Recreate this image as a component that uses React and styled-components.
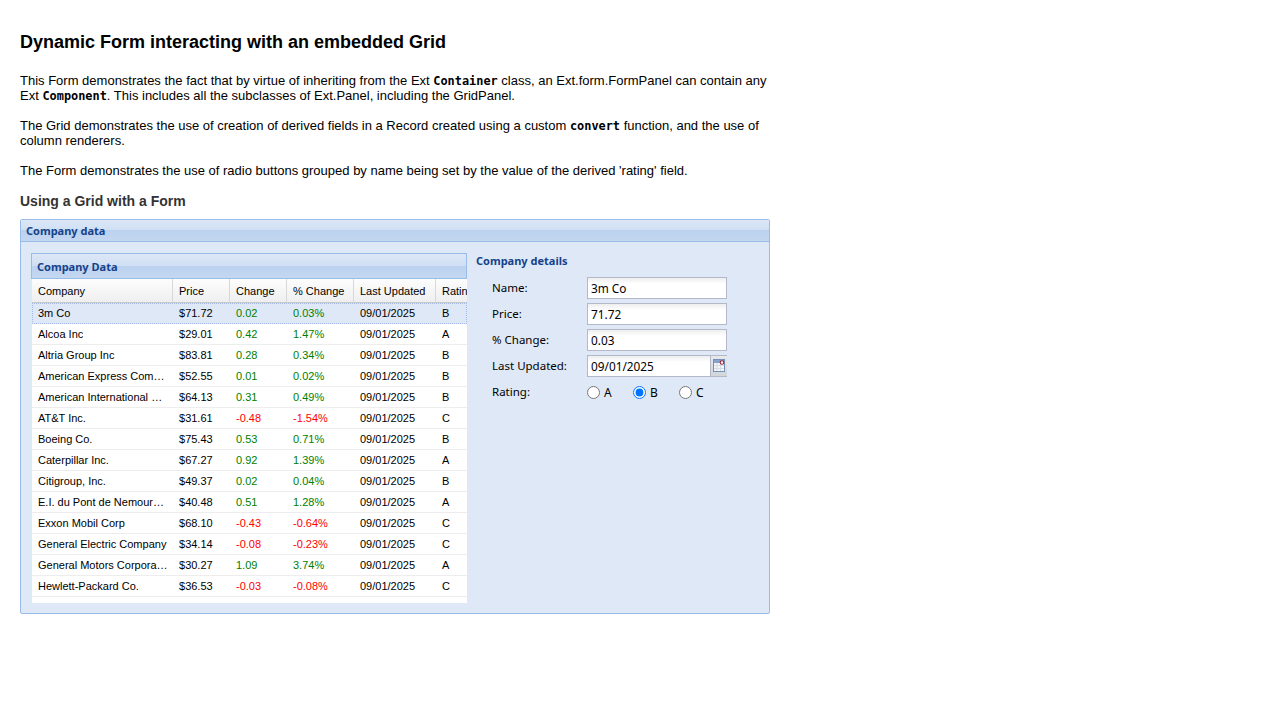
import React from 'react'
import styled, { createGlobalStyle } from 'styled-components'

const GlobalStyle = createGlobalStyle`
    html, body {
        margin: 0;
        padding: 0;
        background: #fff;
    }
    body {
        padding: 20px;
        font-family: "Liberation Sans", Arial, sans-serif;
        font-size: 12px;
        color: #000;
    }
`

const companies = [
    { name: 'American Express Company', price: 52.55, change: 0.01, pct: 0.02, rating: 'B' },
    { name: 'American International Group, Inc.', price: 64.13, change: 0.31, pct: 0.49, rating: 'B' },
    { name: 'AT&T Inc.', price: 31.61, change: -0.48, pct: -1.54, rating: 'C' },
    { name: 'Boeing Co.', price: 75.43, change: 0.53, pct: 0.71, rating: 'B' },
    { name: 'Caterpillar Inc.', price: 67.27, change: 0.92, pct: 1.39, rating: 'A' },
    { name: 'Citigroup, Inc.', price: 49.37, change: 0.02, pct: 0.04, rating: 'B' },
    { name: 'E.I. du Pont de Nemours and Company', price: 40.48, change: 0.51, pct: 1.28, rating: 'A' },
    { name: 'Exxon Mobil Corp', price: 68.1, change: -0.43, pct: -0.64, rating: 'C' },
    { name: 'General Electric Company', price: 34.14, change: -0.08, pct: -0.23, rating: 'C' },
    { name: 'General Motors Corporation', price: 30.27, change: 1.09, pct: 3.74, rating: 'A' },
    { name: 'Hewlett-Packard Co.', price: 36.53, change: -0.03, pct: -0.08, rating: 'C' },
]

const rows = [
    { name: '3m Co', price: 71.72, change: 0.02, pct: 0.03, rating: 'B' },
    { name: 'Alcoa Inc', price: 29.01, change: 0.42, pct: 1.47, rating: 'A' },
    { name: 'Altria Group Inc', price: 83.81, change: 0.28, pct: 0.34, rating: 'B' },
    ...companies,
]

const columns = [
    { title: 'Company', width: 141 },
    { title: 'Price', width: 57 },
    { title: 'Change', width: 57 },
    { title: '% Change', width: 67 },
    { title: 'Last Updated', width: 82 },
    { title: 'Rating', width: 60 },
]

const CalendarIcon = () => (
    <svg width="12" height="13" viewBox="0 0 12 13">
        <rect x="0.5" y="0.5" width="11" height="12" fill="#f2f4f8" stroke="#7391bd" />
        <rect x="1" y="1" width="10" height="3" fill="#86a3cc" />
        <path d="M1 6.5h10M1 9.5h10M4 4v8M7.5 4v8" stroke="#d6dce6" strokeWidth="1" />
        <circle cx="9" cy="3.5" r="1.8" fill="#fff" stroke="#a02030" strokeWidth="1.1" />
    </svg>
)

const App = () => {
    const selected = rows[0]
    return (
        <>
            <GlobalStyle />
            <Title>Dynamic Form interacting with an embedded Grid</Title>
            <Intro>
                This Form demonstrates the fact that by virtue of inheriting from the Ext <Code>Container</Code> class, an Ext.form.FormPanel can contain any Ext <Code>Component</Code>. This includes all the subclasses of Ext.Panel, including the GridPanel.
            </Intro>
            <Intro>
                The Grid demonstrates the use of creation of derived fields in a Record created using a custom <Code>convert</Code> function, and the use of column renderers.
            </Intro>
            <Intro>
                The Form demonstrates the use of radio buttons grouped by name being set by the value of the derived 'rating' field.
            </Intro>
            <SubTitle>Using a Grid with a Form</SubTitle>

            <Panel>
                <PanelHeader>Company data</PanelHeader>
                <PanelBody>
                    <GridPanel>
                        <GridHeader>Company Data</GridHeader>
                        <ColumnHeader>
                            {columns.map((col) => (
                                <ColumnTitle key={col.title} $width={col.width}>{col.title}</ColumnTitle>
                            ))}
                        </ColumnHeader>
                        <GridBody>
                            {rows.map((row, index) => (
                                <Row key={row.name} $selected={index === 0}>
                                    <Cell $width={columns[0].width}>{row.name}</Cell>
                                    <Cell $width={columns[1].width}>${row.price.toFixed(2)}</Cell>
                                    <Cell $width={columns[2].width} $negative={row.change < 0} $colored>{row.change.toFixed(2)}</Cell>
                                    <Cell $width={columns[3].width} $negative={row.pct < 0} $colored>{row.pct.toFixed(2)}%</Cell>
                                    <Cell $width={columns[4].width}>09/01/2025</Cell>
                                    <Cell $width={columns[5].width}>{row.rating}</Cell>
                                </Row>
                            ))}
                        </GridBody>
                    </GridPanel>

                    <Details>
                        <Legend>Company details</Legend>
                        <Field>
                            <FieldLabel>Name:</FieldLabel>
                            <TextInput readOnly value={selected.name} />
                        </Field>
                        <Field>
                            <FieldLabel>Price:</FieldLabel>
                            <TextInput readOnly value={selected.price} />
                        </Field>
                        <Field>
                            <FieldLabel>% Change:</FieldLabel>
                            <TextInput readOnly value={selected.pct} />
                        </Field>
                        <Field>
                            <FieldLabel>Last Updated:</FieldLabel>
                            <DateWrap>
                                <DateInput readOnly value="09/01/2025" />
                                <DateTrigger><CalendarIcon /></DateTrigger>
                            </DateWrap>
                        </Field>
                        <RatingField>
                            <FieldLabel>Rating:</FieldLabel>
                            <RadioGroup>
                                {['A', 'B', 'C'].map((value) => (
                                    <RadioLabel key={value}>
                                        <Radio type="radio" name="rating" readOnly checked={selected.rating === value} />
                                        {value}
                                    </RadioLabel>
                                ))}
                            </RadioGroup>
                        </RatingField>
                    </Details>
                </PanelBody>
            </Panel>
        </>
    )
}

export default App

const Title = styled.h2`
    margin: 12px 0 20px;
    font-size: 18px;
    line-height: 21px;
    font-weight: bold;
    color: #000;
`

const Intro = styled.p`
    width: 750px;
    margin: 0 0 15px;
    font-size: 13px;
    line-height: 15px;
`

const Code = styled.code`
    font-family: "DejaVu Sans Mono", "Liberation Mono", monospace;
    font-size: 11.9px;
    font-weight: bold;
    line-height: 0;
`

const SubTitle = styled.h3`
    margin: 0 0 10px;
    font-size: 14px;
    line-height: 16px;
    font-weight: bold;
    color: #333;
`

const Panel = styled.div`
    width: 750px;
    height: 395px;
    box-sizing: border-box;
    border: 1px solid #99bbe8;
    border-radius: 2px;
    background: #dfe8f6;
    display: flex;
    flex-direction: column;
`

const panelGradient = `linear-gradient(to bottom, #dde8f7 0%, #cfdff4 48%, #bbd1ef 50%, #c4d7f1 100%)`

const PanelHeader = styled.div`
    height: 22px;
    box-sizing: border-box;
    padding-left: 5px;
    background: ${panelGradient};
    border-bottom: 1px solid #99bbe8;
    color: #15428b;
    font-family: "Noto Sans", Tahoma, sans-serif;
    font-size: 11px;
    font-weight: bold;
    line-height: 21px;
`

const PanelBody = styled.div`
    flex: 1;
    display: flex;
    align-items: flex-start;
    padding: 11px 0 0 10px;
    gap: 9px;
`

const GridPanel = styled.div`
    width: 436px;
    height: 350px;
    overflow: hidden;
    display: flex;
    flex-direction: column;
`

const GridHeader = styled.div`
    height: 26px;
    flex: none;
    box-sizing: border-box;
    padding: 2px 0 0 5px;
    background: ${panelGradient};
    border: 1px solid #99bbe8;
    color: #15428b;
    font-family: "Noto Sans", Tahoma, sans-serif;
    font-size: 11px;
    font-weight: bold;
    line-height: 22px;
`

const ColumnHeader = styled.div`
    display: flex;
    height: 24px;
    flex: none;
    margin-left: 1px;
    background: linear-gradient(to bottom, #fdfdfd, #eeeeee);
`

const ColumnTitle = styled.div`
    flex: none;
    width: ${(p) => p.$width}px;
    box-sizing: border-box;
    padding-left: 6px;
    border-right: 1px solid #d8d8d8;
    border-bottom: 1px solid #c8c8c8;
    font-size: 11px;
    line-height: 24px;
    white-space: nowrap;
    overflow: hidden;
`

const GridBody = styled.div`
    flex: 1;
    margin-left: 1px;
    background: #fff;
`

const Row = styled.div`
    display: flex;
    height: 21px;
    box-sizing: border-box;
    background: ${(p) => (p.$selected ? '#dfe8f6' : '#fff')};
    border-bottom: 1px ${(p) => (p.$selected ? 'dotted #a3bae9' : 'solid #ededed')};
    outline: ${(p) => (p.$selected ? '1px dotted #a3bae9' : 'none')};
    outline-offset: -1px;
`

const Cell = styled.div`
    flex: none;
    width: ${(p) => p.$width}px;
    box-sizing: border-box;
    padding: 0 5px 0 6px;
    font-size: 11px;
    line-height: 20px;
    white-space: nowrap;
    overflow: hidden;
    text-overflow: ellipsis;
    color: ${(p) => (p.$colored ? (p.$negative ? '#ff0000' : '#008000') : '#000')};
`

const Details = styled.div`
    flex: 1;
    display: flex;
    flex-direction: column;
`

const Legend = styled.div`
    height: 15px;
    color: #15428b;
    font-family: "Noto Sans", Tahoma, sans-serif;
    font-size: 11px;
    font-weight: bold;
    line-height: 15px;
    margin-bottom: 9px;
`

const Field = styled.div`
    display: flex;
    align-items: center;
    height: 22px;
    margin: 0 0 4px 16px;
`

const RatingField = styled(Field)`
    height: 20px;
    margin-top: 1px;
`

const FieldLabel = styled.label`
    flex: none;
    width: 95px;
    font-family: "Noto Sans", Tahoma, sans-serif;
    font-size: 11.5px;
    color: #000;
    position: relative;
    top: -1px;
`

const TextInput = styled.input`
    width: 140px;
    height: 22px;
    box-sizing: border-box;
    padding: 1px 3px;
    border: 1px solid #b5b8c8;
    background: #fff linear-gradient(to bottom, #eeeeee, #ffffff 6px);
    font-family: "Noto Sans", Tahoma, sans-serif;
    font-size: 11.8px;
    color: #000;
    outline: none;
`

const DateWrap = styled.div`
    display: flex;
    width: 140px;
    height: 22px;
`

const DateInput = styled(TextInput)`
    width: 123px;
    border-right: none;
`

const DateTrigger = styled.div`
    flex: none;
    width: 17px;
    height: 22px;
    box-sizing: border-box;
    padding: 3px 0 0 2px;
    background: linear-gradient(to bottom, #e6e8ea, #d2d5d9);
    border-left: 1px solid #b5b8c8;
    border-bottom: 1px solid #b5b8c8;
    border-top: 1px solid #b5b8c8;
`

const RadioGroup = styled.div`
    display: flex;
`

const RadioLabel = styled.label`
    width: 46px;
    display: flex;
    align-items: center;
    gap: 4px;
    font-family: "Noto Sans", Tahoma, sans-serif;
    font-size: 12px;
`

const Radio = styled.input`
    margin: 0;
    width: 13px;
    height: 13px;
`
